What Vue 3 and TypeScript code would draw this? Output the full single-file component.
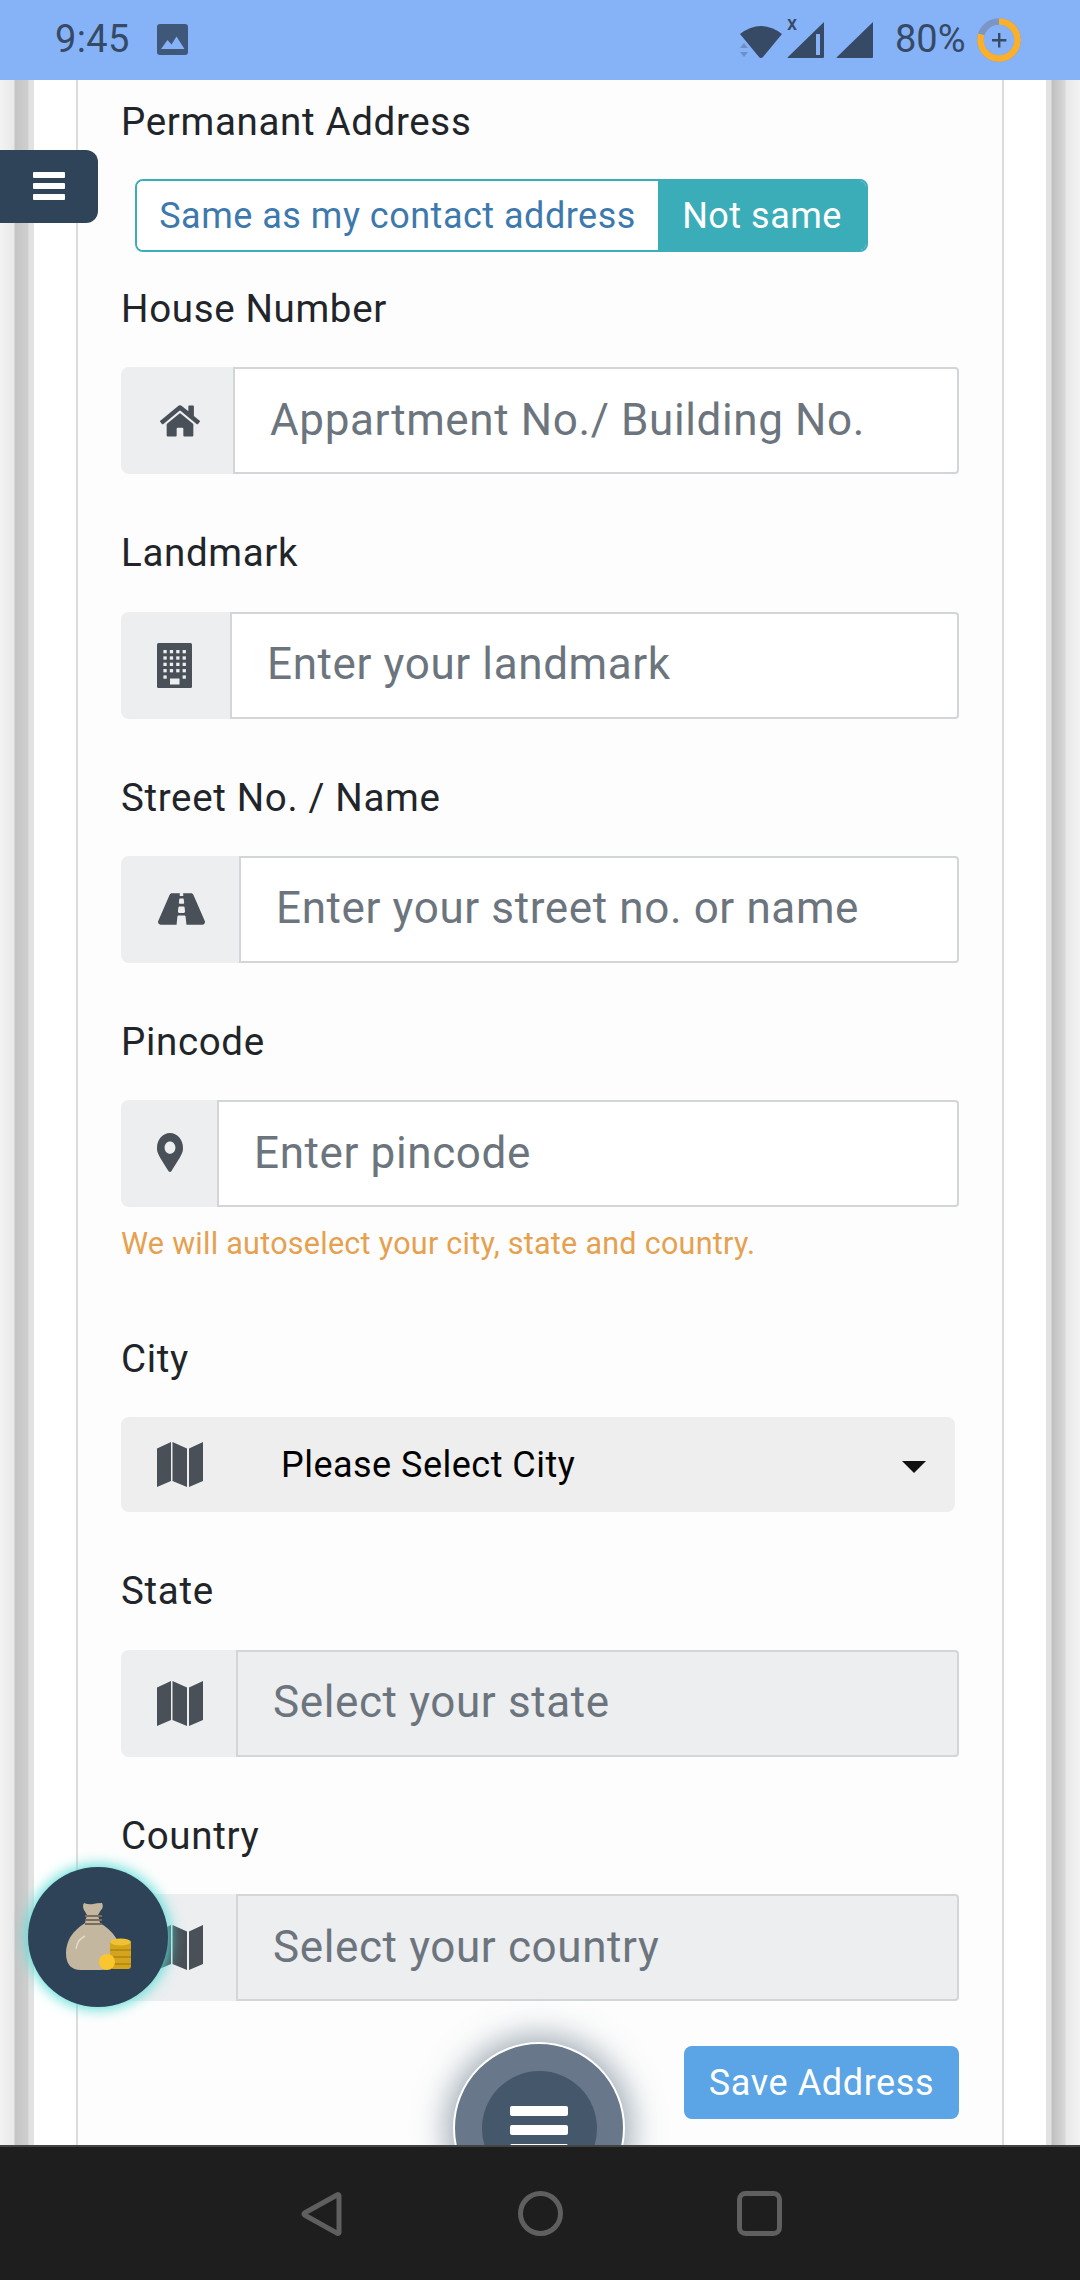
<script setup lang="ts">
interface Field {
  label: string
  placeholder: string
  icon: 'home' | 'building' | 'road' | 'marker' | 'map'
  disabled?: boolean
  help?: string
}

const before: Field[] = [
  { label: 'House Number', placeholder: 'Appartment No./ Building No.', icon: 'home' },
  { label: 'Landmark', placeholder: 'Enter your landmark', icon: 'building' },
  { label: 'Street No. / Name', placeholder: 'Enter your street no. or name', icon: 'road' },
  {
    label: 'Pincode',
    placeholder: 'Enter pincode',
    icon: 'marker',
    help: 'We will autoselect your city, state and country.',
  },
]
const after: Field[] = [
  { label: 'State', placeholder: 'Select your state', icon: 'map', disabled: true },
  { label: 'Country', placeholder: 'Select your country', icon: 'map', disabled: true },
]

const dots: { x: number; y: number }[] = []
for (let r = 0; r < 5; r++) {
  for (let c = 0; c < 4; c++) {
    if (r === 4 && c > 0 && c < 3) continue
    dots.push({ x: 6.4 + c * 6.4, y: 7 + r * 6.35 })
  }
}
</script>

<template>
  <div class="screen">
    <svg width="0" height="0" class="defs">
      <defs>
        <symbol id="i-home" viewBox="0 0 576 512">
          <path d="M280.37 148.26L96 300.11V464a16 16 0 0 0 16 16l112.06-.29a16 16 0 0 0 15.92-16V368a16 16 0 0 1 16-16h64a16 16 0 0 1 16 16v95.64a16 16 0 0 0 16 16.05L464 480a16 16 0 0 0 16-16V300L295.67 148.26a12.19 12.19 0 0 0-15.3 0zM571.6 251.47L488 182.56V44.05a12 12 0 0 0-12-12h-56a12 12 0 0 0-12 12v72.61L318.47 43a48 48 0 0 0-61 0L4.34 251.47a12 12 0 0 0-1.6 16.9l25.5 31A12 12 0 0 0 45.15 301l235.22-193.74a12.19 12.19 0 0 1 15.3 0L530.9 301a12 12 0 0 0 16.9-1.6l25.5-31a12 12 0 0 0-1.7-16.93z" />
        </symbol>
        <symbol id="i-road" viewBox="0 0 576 512">
          <path d="M573.19 402.67l-139.79-320C428.43 71.29 417.6 64 405.68 64h-97.59l2.45 23.16c.5 4.72-3.21 8.84-7.96 8.84h-29.16c-4.75 0-8.46-4.12-7.96-8.84L267.91 64h-97.59c-11.93 0-22.76 7.29-27.73 18.67L2.8 402.67C-6.45 423.86 8.31 448 30.54 448h196.84l10.31-97.68c.86-8.14 7.72-14.32 15.91-14.32h68.8c8.19 0 15.05 6.18 15.91 14.32L348.62 448h196.84c22.23 0 36.99-24.14 27.73-45.33zM260.4 135.16a8 8 0 0 1 7.96-7.16h39.29c4.09 0 7.53 3.09 7.96 7.16l4.6 43.58c.75 7.09-4.81 13.26-11.93 13.26h-40.54c-7.13 0-12.68-6.17-11.93-13.26l4.59-43.58zM315.64 304h-55.29c-9.5 0-16.91-8.23-15.91-17.68l5.07-48c.86-8.14 7.72-14.32 15.91-14.32h45.15c8.19 0 15.05 6.18 15.91 14.32l5.07 48c1 9.45-6.41 17.68-15.91 17.68z" />
        </symbol>
        <symbol id="i-marker" viewBox="0 0 384 512" preserveAspectRatio="none">
          <path d="M172.268 501.67C26.97 291.031 0 269.413 0 192 0 85.961 85.961 0 192 0s192 85.961 192 192c0 77.413-26.97 99.031-172.268 309.67-9.535 13.774-29.93 13.773-39.464 0zM192 272c44.183 0 80-35.817 80-80s-35.817-80-80-80-80 35.817-80 80 35.817 80 80 80z" />
        </symbol>
        <symbol id="i-map" viewBox="0 0 46 45">
          <path d="M0 6.5L14 0v39L0 45zM15.5 0L30 6.5V45l-14.500-6zM32 6.500L46 0v39l-14 6z" />
        </symbol>
      </defs>
    </svg>

    <header class="status">
      <div class="status-left">
        <span class="clock">9:45</span>
        <svg class="pic" width="31" height="31" viewBox="0 0 31 31">
          <rect width="31" height="31" rx="3" fill="#3f5778" />
          <path d="M4 25l6.500-9 4 4.500 5-8 8 12.500z" fill="#86b2f8" />
        </svg>
      </div>
      <div class="status-right">
        <svg width="62" height="40" viewBox="0 0 62 40" class="net">
          <path d="M0 12Q21-4 42 12L23 35q-2 2-4 0z" fill="#364a66" />
          <path d="M4 21l4 5H0zM4 35l4-5H0z" fill="#6f8fc4" />
        </svg>
        <span class="net-x">x</span>
        <svg width="38" height="38" viewBox="0 0 38 38" class="sig">
          <path d="M37 1v35q0 1-1 1H1q-1 0 0-1z" fill="#364a66" />
          <rect x="29" y="13" width="4" height="21" fill="#86b2f8" />
        </svg>
        <svg width="38" height="38" viewBox="0 0 38 38" class="sig2">
          <path d="M37 1v35q0 1-1 1H1q-1 0 0-1z" fill="#364a66" />
        </svg>
        <span class="pct">80%</span>
        <svg width="44" height="44" viewBox="0 0 44 44" class="ring">
          <circle cx="22" cy="22" r="18.500" fill="none" stroke="#7b96c4" stroke-width="6.500" />
          <circle cx="22" cy="22" r="18.500" fill="none" stroke="#fbb02b" stroke-width="6.500" stroke-dasharray="93 116.300" pathLength="116.300" class="ring-arc" />
          <path d="M21 15h2.400v6h6v2.400h-6v6H21v-6h-6V21h6z" fill="#364a66" />
        </svg>
      </div>
    </header>

    <main class="page">
      <div class="strip strip-left"></div>
      <div class="sheet">
        <section class="card">
          <div class="label perm">Permanant Address</div>
          <div class="toggle">
            <span class="toggle-off">Same as my contact address</span>
            <span class="toggle-on">Not same</span>
          </div>

          <div v-for="f in before" :key="f.label" class="field">
            <div class="label">{{ f.label }}</div>
            <div class="group">
              <span class="addon" :class="`addon-${f.icon}`">
                <svg v-if="f.icon === 'building'" class="ic" width="35" height="45" viewBox="0 0 35 45">
                  <rect width="35" height="45" rx="1.500" fill="#495057" />
                  <rect v-for="(d, i) in dots" :key="i" :x="d.x" :y="d.y" width="3.300" height="3.300" fill="#eceef0" />
                  <rect x="13" y="35.500" width="9.500" height="6" fill="#eceef0" />
                </svg>
                <svg v-else class="ic"><use :href="`#i-${f.icon}`" /></svg>
              </span>
              <span class="input">{{ f.placeholder }}</span>
            </div>
            <div v-if="f.help" class="help">{{ f.help }}</div>
          </div>

          <div class="field city">
            <div class="label">City</div>
            <div class="select">
              <span class="addon addon-map addon-plain">
                <svg class="ic"><use href="#i-map" /></svg>
              </span>
              <span class="select-text">Please Select City</span>
              <span class="caret"></span>
            </div>
          </div>

          <div v-for="f in after" :key="f.label" class="field">
            <div class="label">{{ f.label }}</div>
            <div class="group">
              <span class="addon addon-map">
                <svg class="ic"><use href="#i-map" /></svg>
              </span>
              <span class="input disabled">{{ f.placeholder }}</span>
            </div>
          </div>

          <div class="actions">
            <button class="save" type="button">Save Address</button>
          </div>
        </section>
      </div>
      <div class="strip strip-right"></div>

      <button class="side-tab" type="button" aria-label="Menu">
        <i></i><i></i><i></i>
      </button>

      <div class="money">
        <svg width="70" height="72" viewBox="0 0 70 72">
          <path d="M18 2q5 2 9 1t9-1q2 4-1 7l-3 5 2 8q20 12 20 30 0 17-20 17H15Q0 69 0 52q0-18 19-30l2-8-3-5q-2-4 0-7z" fill="#c4b7a0" />
          <path d="M19 14h17v2H19zM19 18h17v2H19zM19 22h17v2H19z" fill="#7a6d5d" />
          <path d="M10 48q1-9 9-13" fill="none" stroke="#e2d9c8" stroke-width="1.500" />
          <rect x="44" y="40" width="21" height="28" rx="3" fill="#d4a41c" />
          <ellipse cx="54.500" cy="41" rx="10.500" ry="3.500" fill="#f0c132" />
          <path d="M44 48h21v2H44zM44 55h21v2H44zM44 62h21v2H44z" fill="#b98d14" />
          <circle cx="41" cy="61" r="8" fill="#fbc52e" />
        </svg>
      </div>

      <div class="fab">
        <div class="fab-inner">
          <i></i><i></i><i></i>
        </div>
      </div>
    </main>

    <nav class="nav">
      <svg width="44" height="46" viewBox="0 0 44 46">
        <path d="M39 4.500v37a1 1 0 0 1-1.500.8L4.500 24a1.200 1.200 0 0 1 0-2L37.500 3.700a1 1 0 0 1 1.500.8z" fill="none" stroke="#5f5f5f" stroke-width="5" stroke-linejoin="round" />
      </svg>
      <svg width="45" height="45" viewBox="0 0 45 45">
        <circle cx="22.500" cy="22.500" r="20" fill="none" stroke="#5f5f5f" stroke-width="5" />
      </svg>
      <svg width="45" height="45" viewBox="0 0 45 45">
        <rect x="2.500" y="2.500" width="40" height="40" rx="6" fill="none" stroke="#5f5f5f" stroke-width="5" />
      </svg>
    </nav>
  </div>
</template>

<style>
html,
body {
  margin: 0;
  background: #fff;
}
</style>

<style scoped>
.screen {
  position: relative;
  width: 1080px;
  height: 2280px;
  display: flex;
  flex-direction: column;
  overflow: hidden;
  font-family: Roboto, "Noto Sans", sans-serif;
  color: #212529;
}
.defs {
  position: absolute;
}
.status {
  flex: none;
  height: 80px;
  background: #86b2f8;
  display: flex;
  align-items: center;
  justify-content: space-between;
  color: #364a66;
  font-size: 38px;
  padding: 0 0 0 55px;
  box-sizing: border-box;
}
.status-left,
.status-right {
  display: flex;
  align-items: center;
}
.clock {
  line-height: 1;
  margin-top: -2px;
  letter-spacing: 0.4px;
}
.pic {
  margin-left: 27px;
  margin-top: -1px;
}
.status-right {
  width: 340px;
  position: relative;
  height: 80px;
}
.net {
  position: absolute;
  left: 0;
  top: 22px;
}
.net-x {
  position: absolute;
  left: 47px;
  top: 13px;
  font-size: 20px;
  font-weight: 500;
  line-height: 20px;
}
.sig {
  position: absolute;
  left: 47px;
  top: 21px;
}
.sig2 {
  position: absolute;
  left: 96px;
  top: 21px;
}
.pct {
  position: absolute;
  left: 155px;
  top: 20px;
  line-height: 38px;
}
.ring {
  position: absolute;
  left: 237px;
  top: 18px;
}
.ring-arc {
  transform: rotate(-90deg);
  transform-origin: 22px 22px;
}
.page {
  position: relative;
  flex: 1;
  min-height: 0;
  display: flex;
  overflow: hidden;
}
.strip {
  flex: none;
  width: 34px;
}
.strip-left {
  background: linear-gradient(90deg, #f3f3f3 0, #e8e8e8 14px, #c4c4c4 15px, #cfcfcf 28px, #e2e2e2 29px, #e2e2e2 34px);
}
.strip-right {
  background: linear-gradient(270deg, #f3f3f3 0, #e8e8e8 14px, #d8d8d8 15px, #c0c0c0 28px, #e2e2e2 29px, #e2e2e2 34px);
}
.sheet {
  flex: 1;
  min-width: 0;
  background: #fff;
  padding: 0 42px;
}
.card {
  height: 100%;
  background: #fdfdfd;
  border-left: 2px solid #dcdcdc;
  border-right: 2px solid #dcdcdc;
  padding: 12px 43px 0;
  box-sizing: border-box;
}
.label {
  font-size: 38.5px;
  line-height: 58px;
  margin-bottom: 30.3px;
  color: #212529;
  letter-spacing: 0.66px;
  position: relative;
  top: 1px;
}
.perm {
  margin-bottom: 29px;
}
.toggle {
  display: flex;
  width: 733px;
  height: 73px;
  margin: 0 0 27px 14px;
  font-size: 36px;
  letter-spacing: 0.5px;
  box-sizing: border-box;
  border-radius: 8px;
  overflow: hidden;
  border: 2px solid #3badb9;
}
.toggle-off {
  width: 521px;
  display: flex;
  align-items: center;
  justify-content: center;
  background: #fff;
  color: #3d79ad;
}
.toggle-on {
  flex: 1;
  display: flex;
  align-items: center;
  justify-content: center;
  background: #3badb9;
  color: #fff;
}
.field {
  margin-bottom: 49px;
}
.group {
  display: flex;
  height: 107px;
}
.addon {
  flex: none;
  display: flex;
  align-items: center;
  padding: 0 36px;
  background: #eceef0;
  border-radius: 8px 0 0 8px;
}
.ic {
  display: block;
  fill: #495057;
}
.addon-building .ic {
  margin-right: 2px;
}
.addon-home .ic {
  width: 40px;
  height: 36px;
  margin: 0 -3px 0 3px;
}
.addon-road .ic {
  width: 47px;
  height: 42px;
  margin: 0 -2px 0 1px;
}
.addon-marker .ic {
  width: 26px;
  height: 39px;
  margin-right: -2px;
  margin-top: -2px;
}
.addon-map .ic {
  width: 46px;
  height: 45px;
  margin-right: -3px;
}
.input {
  flex: 1;
  min-width: 0;
  display: flex;
  align-items: center;
  padding: 0 0 2px 35px;
  box-sizing: border-box;
  background: #fff;
  border: 2.500px solid #d3d6d9;
  border-radius: 0 4px 4px 0;
  font-size: 44px;
  letter-spacing: 0.62px;
  color: #6c757d;
}
.input.disabled {
  background: #eceef0;
}
.help {
  margin-top: 14px;
  margin-bottom: 62px;
  font-size: 30.500px;
  line-height: 46px;
  letter-spacing: 0.27px;
  color: #e5a14f;
}
.field:has(.help) {
  margin-bottom: 0;
}
.select {
  display: flex;
  align-items: center;
  width: 834px;
  height: 95px;
  background: #eeeeef;
  border-radius: 8px;
}
.addon-plain {
  align-self: stretch;
  background: transparent;
}
.select-text {
  flex: 1;
  margin-left: 45px;
  font-size: 36px;
  letter-spacing: 0.48px;
  color: #000;
}
.caret {
  width: 0;
  height: 0;
  margin: 4px 29px 0 0;
  border-left: 12px solid transparent;
  border-right: 12px solid transparent;
  border-top: 12px solid #111;
}
.actions {
  display: flex;
  justify-content: flex-end;
  margin-top: -4px;
}
.save {
  width: 275px;
  height: 73px;
  padding: 0;
  border: 0;
  border-radius: 8px;
  background: #5ba4e6;
  color: #fff;
  font-family: inherit;
  font-size: 36px;
  letter-spacing: 0.6px;
}
.side-tab {
  position: absolute;
  left: 0;
  top: 70px;
  width: 98px;
  height: 73px;
  padding: 22px 33px 0;
  box-sizing: border-box;
  border: 0;
  border-radius: 0 12px 12px 0;
  background: #2f4459;
  display: flex;
  flex-direction: column;
  gap: 5px;
}
.side-tab i {
  display: block;
  width: 32px;
  height: 6px;
  border-radius: 1px;
  background: #fff;
}
.money {
  position: absolute;
  left: 28px;
  top: 1787px;
  width: 140px;
  height: 140px;
  border-radius: 50%;
  background: #2e4358;
  box-shadow: 0 0 14px 2px #56dcd4;
  display: flex;
  align-items: center;
  justify-content: center;
}
.money svg {
  margin: 0 0 0 6px;
}
.fab {
  position: absolute;
  left: 453px;
  top: 1962px;
  width: 172px;
  height: 172px;
  box-sizing: border-box;
  border: 2px solid #fff;
  border-radius: 50%;
  background: #687789;
  box-shadow: 0 0 32px 6px rgba(60, 85, 105, 0.5);
  display: flex;
  align-items: center;
  justify-content: center;
}
.fab-inner {
  width: 115px;
  height: 115px;
  padding-top: 3px;
  box-sizing: border-box;
  border-radius: 50%;
  background: #45576b;
  display: flex;
  flex-direction: column;
  align-items: center;
  justify-content: center;
  gap: 9px;
}
.fab-inner i {
  display: block;
  width: 58px;
  height: 10px;
  border-radius: 2px;
  background: #fff;
}
.nav {
  flex: none;
  height: 135px;
  box-sizing: border-box;
  border-top: 2px solid #444;
  background: #1e1e1e;
  position: relative;
  z-index: 2;
  display: flex;
  align-items: center;
  padding-left: 300px;
  gap: 174px;
}
</style>
